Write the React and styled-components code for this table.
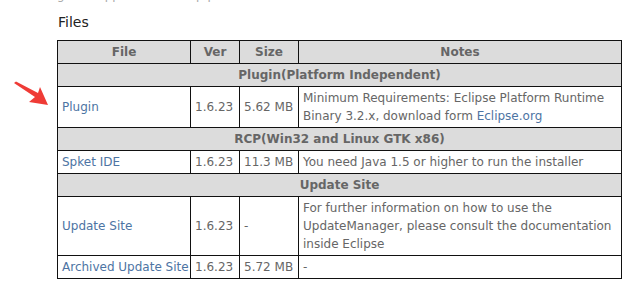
import React from "react"
import styled, { createGlobalStyle } from "styled-components"

const GlobalStyle = createGlobalStyle`
  body {
    margin: 0;
    background: #fff;
    font-family: "DejaVu Sans", Verdana, sans-serif;
  }
`

const Page = styled.div`
  position: relative;
  width: 637px;
  height: 287px;
  overflow: hidden;
  padding-left: 57px;
  box-sizing: border-box;
`

const CutLine = styled.div`
  margin-top: -12px;
  height: 14px;
  font-size: 12px;
  line-height: 14px;
  color: #aaa;
`

const Heading = styled.h3`
  margin: 11px 0 9px 1px;
  font-size: 14px;
  font-weight: normal;
  color: #222;
  line-height: 18px;
`

const Table = styled.table`
  border-collapse: collapse;
  table-layout: fixed;
  width: 565px;
  font-size: 12px;
  color: #666;
  td,
  th {
    border: 1px solid #111;
    padding: 2px 4px;
    line-height: 18px;
    vertical-align: middle;
  }
`

const Head = styled.th`
  background: #dcdcdc;
  color: #666;
  font-weight: bold;
  text-align: center;
`

const Cell = styled.td`
  text-align: left;
  white-space: ${p => (p.$wrap ? "normal" : "nowrap")};
`

const Link = styled.a`
  color: #4d74a3;
  text-decoration: none;
`

const Arrow = styled.svg`
  position: absolute;
  left: 12px;
  top: 80px;
`

const rows = [
  {
    section: "Plugin(Platform Independent)",
    file: "Plugin",
    ver: "1.6.23",
    size: "5.62 MB",
    notes: (
      <>
        Minimum Requirements: Eclipse Platform Runtime Binary 3.2.x, download form{" "}
        <Link href="#">Eclipse.org</Link>
      </>
    ),
  },
  {
    section: "RCP(Win32 and Linux GTK x86)",
    file: "Spket IDE",
    ver: "1.6.23",
    size: "11.3 MB",
    notes: "You need Java 1.5 or higher to run the installer",
  },
  {
    section: "Update Site",
    file: "Update Site",
    ver: "1.6.23",
    size: "-",
    notes:
      "For further information on how to use the UpdateManager, please consult the documentation inside Eclipse",
  },
]

const App = () => (
  <Page>
    <GlobalStyle />
    <CutLine>g a e support a ab ec up p</CutLine>
    <Heading>Files</Heading>
    <Table>
      <colgroup>
        <col style={{ width: 133 }} />
        <col style={{ width: 49 }} />
        <col style={{ width: 59 }} />
        <col />
      </colgroup>
      <thead>
        <tr>
          <Head>File</Head>
          <Head>Ver</Head>
          <Head>Size</Head>
          <Head>Notes</Head>
        </tr>
      </thead>
      <tbody>
        {rows.map(r => (
          <React.Fragment key={r.file}>
            <tr>
              <Head colSpan={4}>{r.section}</Head>
            </tr>
            <tr>
              <Cell>
                <Link href="#">{r.file}</Link>
              </Cell>
              <Cell>{r.ver}</Cell>
              <Cell>{r.size}</Cell>
              <Cell $wrap>{r.notes}</Cell>
            </tr>
          </React.Fragment>
        ))}
        <tr>
          <Cell>
            <Link href="#">Archived Update Site</Link>
          </Cell>
          <Cell>1.6.23</Cell>
          <Cell>5.72 MB</Cell>
          <Cell $wrap>-</Cell>
        </tr>
      </tbody>
    </Table>
    <Arrow width="40" height="30" viewBox="0 0 40 30">
      <path d="M2 3 L4 1.5 L26 13 L28 7 L36 25 L17 22 L23 17 Z" fill="#ef3b36" />
    </Arrow>
  </Page>
)

export default App
